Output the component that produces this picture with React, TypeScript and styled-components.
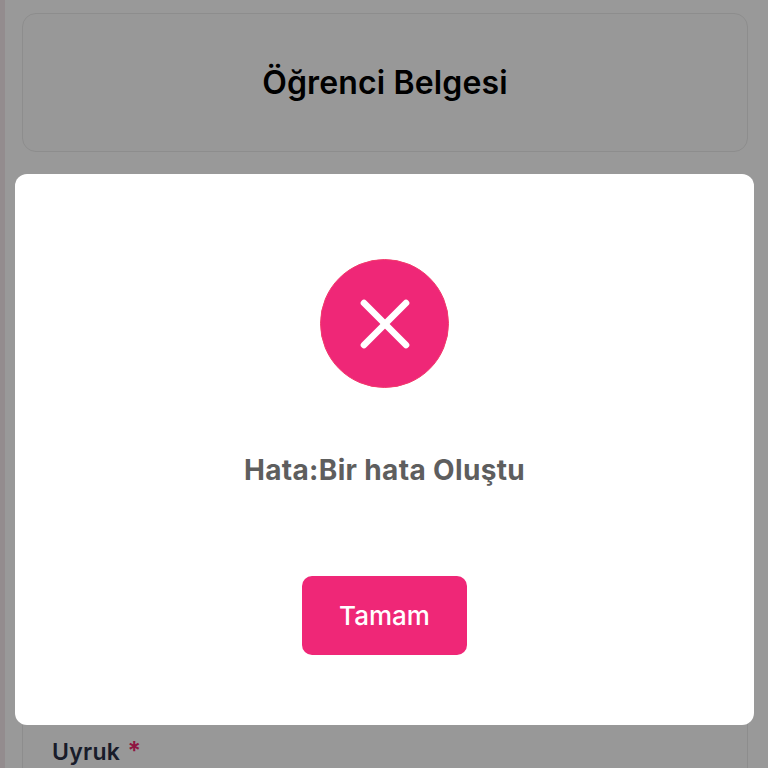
import React from 'react';
import styled, { createGlobalStyle } from 'styled-components';
import { X } from 'lucide-react';

const GlobalStyle = createGlobalStyle`
  html, body {
    margin: 0;
    padding: 0;
    height: 100%;
    background: #fff;
    font-family: Inter, "Liberation Sans", sans-serif;
  }
  * {
    box-sizing: border-box;
  }
`;

const Screen = styled.div`
  position: relative;
  width: 768px;
  height: 768px;
  overflow: hidden;
  background: #fff;
`;

const Page = styled.main`
  height: 100%;
  padding: 13px 20px 0 17px;
  border-left: 5px solid #f5eaed;
  display: flex;
  flex-direction: column;
  gap: 22px;
`;

const TitleCard = styled.header`
  height: 139px;
  flex-shrink: 0;
  border: 1px solid #ebebeb;
  border-radius: 14px;
  background: #fefefe;
  display: flex;
  align-items: center;
  justify-content: center;
`;

const Title = styled.h1`
  margin: 0;
  font-size: 32px;
  font-weight: 600;
  letter-spacing: 0.15px;
  color: #000;
`;

const FormCard = styled.section`
  flex: 1;
  margin-bottom: -20px;
  border: 1px solid #ebebeb;
  border-radius: 14px;
  background: #fefefe;
  padding: 563px 29px 0;
`;

const Label = styled.label`
  display: block;
  font-size: 23px;
  line-height: 28px;
  font-weight: 600;
  letter-spacing: 0.3px;
  color: #2b3046;
`;

const Required = styled.span`
  color: #f0266f;
  font-size: 25px;
  line-height: 0;
  margin-left: 1px;
`;

const Backdrop = styled.div`
  position: absolute;
  inset: 0;
  background: rgba(0, 0, 0, 0.4);
  padding: 174px 14px 0 15px;
`;

const Dialog = styled.div`
  height: 551px;
  background: #fff;
  border-radius: 12px;
  display: flex;
  flex-direction: column;
  align-items: center;
  padding-top: 85px;
`;

const ErrorBadge = styled.div`
  width: 129px;
  height: 129px;
  border-radius: 50%;
  border: 1px solid #f23a6c;
  background: #ef2777;
  display: flex;
  align-items: center;
  justify-content: center;
  color: #fff;
`;

const Message = styled.p`
  margin: 63px 0 0;
  font-size: 28px;
  line-height: 38px;
  font-weight: 700;
  letter-spacing: 0.35px;
  color: #5e5e5e;
`;

const OkButton = styled.button`
  margin-top: 87px;
  width: 165px;
  height: 79px;
  border: none;
  border-radius: 10px;
  background: #ef2777;
  color: #fff;
  font-family: inherit;
  font-size: 26px;
  font-weight: 500;
`;

const App: React.FC = () => (
  <Screen>
    <GlobalStyle />
    <Page>
      <TitleCard>
        <Title>Öğrenci Belgesi</Title>
      </TitleCard>
      <FormCard>
        <Label>
          Uyruk <Required>*</Required>
        </Label>
      </FormCard>
    </Page>
    <Backdrop>
      <Dialog>
        <ErrorBadge>
          <X size={84} strokeWidth={1.9} />
        </ErrorBadge>
        <Message>Hata:Bir hata Oluştu</Message>
        <OkButton>Tamam</OkButton>
      </Dialog>
    </Backdrop>
  </Screen>
);

export default App;
